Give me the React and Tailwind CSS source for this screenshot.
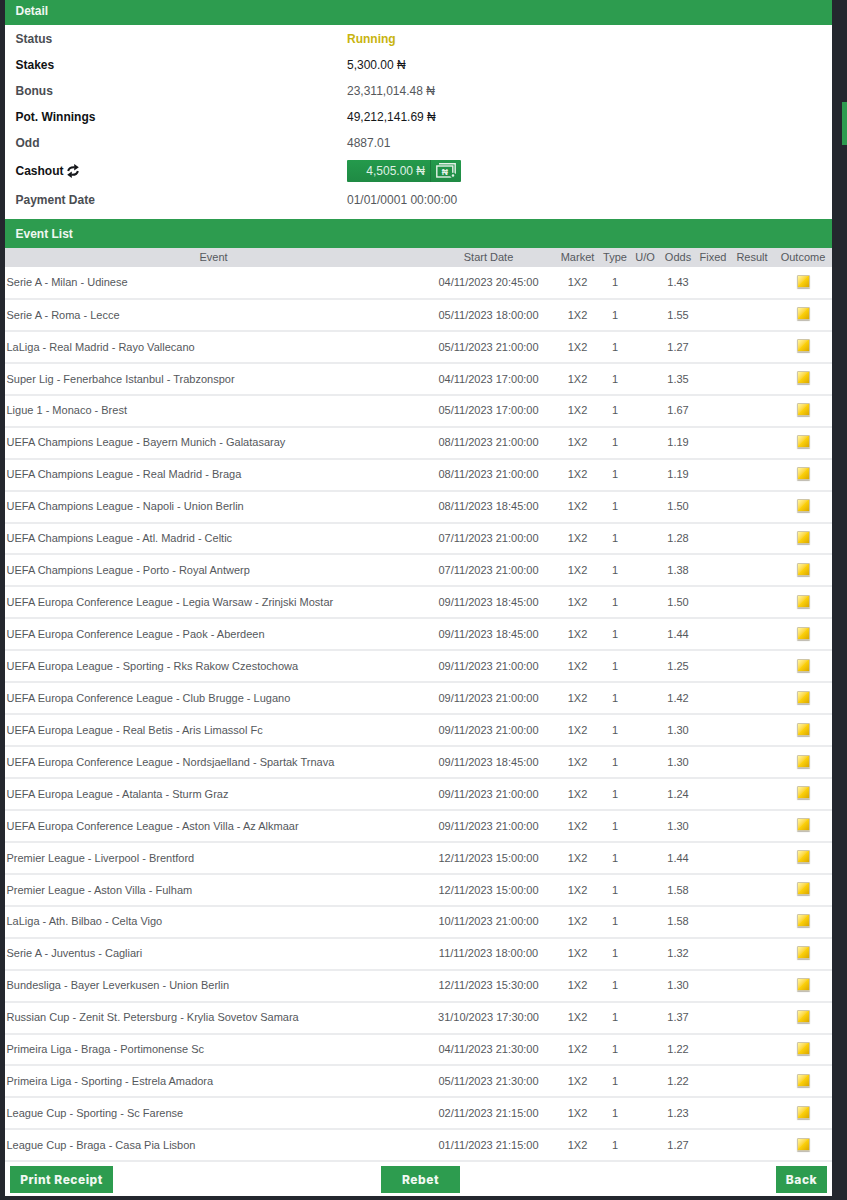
const rows = [
  ["Serie A - Milan - Udinese", "04/11/2023 20:45:00", "1.43"],
  ["Serie A - Roma - Lecce", "05/11/2023 18:00:00", "1.55"],
  ["LaLiga - Real Madrid - Rayo Vallecano", "05/11/2023 21:00:00", "1.27"],
  ["Super Lig - Fenerbahce Istanbul - Trabzonspor", "04/11/2023 17:00:00", "1.35"],
  ["Ligue 1 - Monaco - Brest", "05/11/2023 17:00:00", "1.67"],
  ["UEFA Champions League - Bayern Munich - Galatasaray", "08/11/2023 21:00:00", "1.19"],
  ["UEFA Champions League - Real Madrid - Braga", "08/11/2023 21:00:00", "1.19"],
  ["UEFA Champions League - Napoli - Union Berlin", "08/11/2023 18:45:00", "1.50"],
  ["UEFA Champions League - Atl. Madrid - Celtic", "07/11/2023 21:00:00", "1.28"],
  ["UEFA Champions League - Porto - Royal Antwerp", "07/11/2023 21:00:00", "1.38"],
  ["UEFA Europa Conference League - Legia Warsaw - Zrinjski Mostar", "09/11/2023 18:45:00", "1.50"],
  ["UEFA Europa Conference League - Paok - Aberdeen", "09/11/2023 18:45:00", "1.44"],
  ["UEFA Europa League - Sporting - Rks Rakow Czestochowa", "09/11/2023 21:00:00", "1.25"],
  ["UEFA Europa Conference League - Club Brugge - Lugano", "09/11/2023 21:00:00", "1.42"],
  ["UEFA Europa League - Real Betis - Aris Limassol Fc", "09/11/2023 21:00:00", "1.30"],
  ["UEFA Europa Conference League - Nordsjaelland - Spartak Trnava", "09/11/2023 18:45:00", "1.30"],
  ["UEFA Europa League - Atalanta - Sturm Graz", "09/11/2023 21:00:00", "1.24"],
  ["UEFA Europa Conference League - Aston Villa - Az Alkmaar", "09/11/2023 21:00:00", "1.30"],
  ["Premier League - Liverpool - Brentford", "12/11/2023 15:00:00", "1.44"],
  ["Premier League - Aston Villa - Fulham", "12/11/2023 15:00:00", "1.58"],
  ["LaLiga - Ath. Bilbao - Celta Vigo", "10/11/2023 21:00:00", "1.58"],
  ["Serie A - Juventus - Cagliari", "11/11/2023 18:00:00", "1.32"],
  ["Bundesliga - Bayer Leverkusen - Union Berlin", "12/11/2023 15:30:00", "1.30"],
  ["Russian Cup - Zenit St. Petersburg - Krylia Sovetov Samara", "31/10/2023 17:30:00", "1.37"],
  ["Primeira Liga - Braga - Portimonense Sc", "04/11/2023 21:30:00", "1.22"],
  ["Primeira Liga - Sporting - Estrela Amadora", "05/11/2023 21:30:00", "1.22"],
  ["League Cup - Sporting - Sc Farense", "02/11/2023 21:15:00", "1.23"],
  ["League Cup - Braga - Casa Pia Lisbon", "01/11/2023 21:15:00", "1.27"],
];

const cols = ["w-[417px]", "w-[133px]", "w-[45px]", "w-[30px]", "w-[30px]", "w-[36px]", "w-[34px]", "w-[44px]", "w-[58px]"];
const heads = ["Event", "Start Date", "Market", "Type", "U/O", "Odds", "Fixed", "Result", "Outcome"];

function Bar({ children, className }) {
  return <div className={`bg-[#2d9c4f] text-[#f0f7f1] font-bold text-[12px] pl-[10.5px] flex items-center h-full ${className}`}>{children}</div>;
}

function Detail({ label, strong, children, h }) {
  return (
    <div className={`grid grid-cols-[331.5px_1fr] items-center pl-[10.5px] ${h}`}>
      <div className={`font-bold text-[12px] flex items-center gap-[3px] ${strong ? "text-[#101214]" : "text-[#4a4d52]"}`}>{label}</div>
      <div className="text-[12px]">{children}</div>
    </div>
  );
}

function Square() {
  return (
    <span className="block w-[13px] h-[13px] rounded-[1px] mx-auto -translate-y-[1px] border border-[#cfc6a6] bg-gradient-to-br from-[#fff6a0] via-[#fbd00c] to-[#dca800] shadow-[0_1px_1px_rgba(90,80,50,0.4)]" />
  );
}

function CashIcon() {
  return (
    <svg width="20" height="15" viewBox="0 0 20 15" fill="none" stroke="#e4f1e7" strokeWidth="1.4">
      <path d="M3 .8h16.2v10" />
      <rect x=".8" y="3" width="16" height="11" />
      <text x="8.8" y="11.6" fontSize="8.5" fontWeight="700" textAnchor="middle" fill="#e4f1e7" stroke="none" fontFamily="Liberation Sans, sans-serif">₦</text>
      <circle cx="17" cy="12.5" r="2" fill="#e4f1e7" stroke="#23914a" />
    </svg>
  );
}

function RefreshIcon() {
  return (
    <svg width="12" height="14" viewBox="0 0 12 14" fill="none" stroke="#15171a" strokeWidth="2">
      <path d="M1.2 7C1.6 4.2 3.6 3 7.6 3.2" />
      <path d="M7.2 0 11.8 3.2 7.2 6.4z" fill="#15171a" stroke="none" />
      <path d="M10.8 7C10.4 9.8 8.4 11 4.4 10.8" />
      <path d="M4.8 7.6 .2 10.8 4.8 14z" fill="#15171a" stroke="none" />
    </svg>
  );
}

function ActionButton({ className, children }) {
  return (
    <button className={`h-[27px] bg-[#2d9c4f] text-[#f1f8f2] text-[12px] font-extrabold tracking-[0.5px] font-['Inter',sans-serif] ${className}`}>
      {children}
    </button>
  );
}

export default function App() {
  return (
    <div className="relative w-[847px] h-[1200px] overflow-hidden bg-[#24272e] font-['Liberation_Sans',Arial,sans-serif] pl-[5px]">
      <div className="absolute right-0 top-[102px] w-[5px] h-[43px] bg-[#2d9c4f]" />
      <div className="w-[827px] h-[1196px] bg-white flex flex-col">
        <div className="h-[25px] shrink-0"><Bar className="pb-[3px]">Detail</Bar></div>
        <div className="flex flex-col h-[194px] shrink-0 pt-[1px]">
          <Detail label="Status" h="h-[26px]"><span className="font-bold text-[#c8b40f]">Running</span></Detail>
          <Detail label="Stakes" strong h="h-[26px]"><span className="text-[#15171a]">5,300.00 ₦</span></Detail>
          <Detail label="Bonus" h="h-[26px]"><span className="text-[#55585c]">23,311,014.48 ₦</span></Detail>
          <Detail label="Pot. Winnings" strong h="h-[25px]"><span className="text-[#15171a]">49,212,141.69 ₦</span></Detail>
          <Detail label="Odd" h="h-[27px]"><span className="text-[#55585c]">4887.01</span></Detail>
          <Detail label={<>Cashout <RefreshIcon /></>} strong h="h-[29px]">
            <div className="w-[114px] h-[22px] flex bg-gradient-to-b from-[#249a4c] to-[#1f8a44] rounded-[1px] text-[#dff0e3]">
              <span className="w-[84px] flex items-center justify-end pr-[5px] border-r border-[#1a7a3b]">4,505.00 ₦</span>
              <span className="flex-1 flex items-center justify-center"><CashIcon /></span>
            </div>
          </Detail>
          <Detail label="Payment Date" h="h-[29px]"><span className="text-[#55585c]">01/01/0001 00:00:00</span></Detail>
        </div>
        <div className="h-[29px] shrink-0"><Bar>Event List</Bar></div>
        <table className="table-fixed w-[827px] border-collapse text-[11px] text-[#55585c] shrink-0">
          <colgroup>
            {cols.map((c, i) => <col key={i} className={c} />)}
          </colgroup>
          <thead>
            <tr className="h-[19px] bg-[#dcdde1]">
              {heads.map((h) => <th key={h} className="p-0 font-normal text-[#56595e] text-center">{h}</th>)}
            </tr>
          </thead>
          <tbody>
            {rows.map((r) => (
              <tr key={r[0]} className="h-[31.95px] border-b-2 border-[#ebecee]">
                <td className="p-0 pl-[1.5px] text-left">{r[0]}</td>
                <td className="p-0 text-center">{r[1]}</td>
                <td className="p-0 text-center">1X2</td>
                <td className="p-0 text-center">1</td>
                <td className="p-0"></td>
                <td className="p-0 text-center">{r[2]}</td>
                <td className="p-0"></td>
                <td className="p-0"></td>
                <td className="p-0"><Square /></td>
              </tr>
            ))}
          </tbody>
        </table>
        <div className="flex pl-[5px] pr-[5px] pt-[4px]">
          <ActionButton className="w-[103px]">Print Receipt</ActionButton>
          <ActionButton className="w-[79px] ml-[268px]">Rebet</ActionButton>
          <ActionButton className="w-[51px] ml-auto">Back</ActionButton>
        </div>
      </div>
    </div>
  );
}
